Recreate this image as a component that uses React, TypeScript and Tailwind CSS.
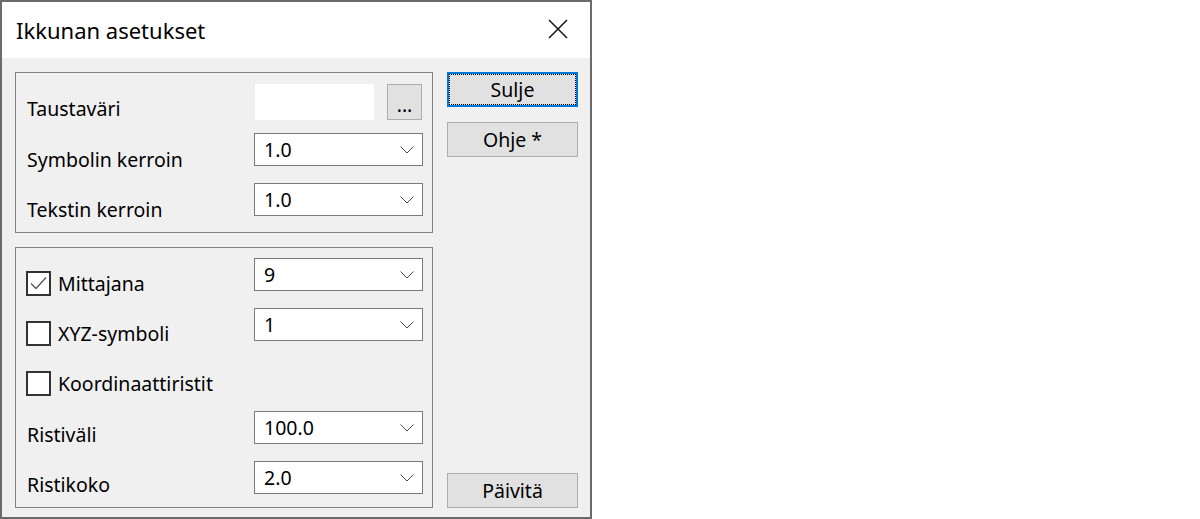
import React from "react";

const FONT = "font-['Noto_Sans',sans-serif]";

function Chevron() {
  return (
    <svg width="14" height="8" viewBox="0 0 14 8" fill="none">
      <path d="M0.5 0.5L7 7L13.5 0.5" stroke="#4a4a4a" strokeWidth="1" />
    </svg>
  );
}

function Combo({ value }: { value: string }) {
  return (
    <div className="flex h-[33px] w-[169px] items-center justify-between border border-[#7a7a7a] bg-white pl-[9px] pr-[8px]">
      <span className="text-[19.5px] leading-[20px]">{value}</span>
      <Chevron />
    </div>
  );
}

function CheckBox({ checked }: { checked?: boolean }) {
  return (
    <div className="flex h-[25px] w-[25px] shrink-0 items-center justify-center border-2 border-[#333333] bg-white">
      {checked && (
        <svg width="21" height="21" viewBox="0 0 21 21" fill="none">
          <path d="M3 10.5L8 15.5L18 4.5" stroke="#555555" strokeWidth="1.3" />
        </svg>
      )}
    </div>
  );
}

function Btn({ label, focused }: { label: string; focused?: boolean }) {
  if (focused) {
    return (
      <div className="flex h-[35px] w-[131px] border-2 border-[#0078d7] bg-[#e1e1e1]">
        <div className="flex flex-1 items-center justify-center border border-dotted border-black">
          <span className="text-[19.5px] leading-[20px]">{label}</span>
        </div>
      </div>
    );
  }
  return (
    <div className="flex h-[35px] w-[131px] items-center justify-center border border-[#adadad] bg-[#e1e1e1]">
      <span className="text-[19.5px] leading-[20px]">{label}</span>
    </div>
  );
}

export default function App() {
  return (
    <div className={`flex h-[519px] w-[1200px] bg-white text-black ${FONT}`}>
      <div className="flex h-[519px] w-[592px] flex-col border-2 border-[#6b6b6b]">
        {/* title bar */}
        <div className="flex h-[56px] shrink-0 justify-between bg-white">
          <span className="pl-[14px] pt-[17px] text-[22px] leading-[22px]">Ikkunan asetukset</span>
          <svg className="mr-[22px] mt-[17px]" width="20" height="20" viewBox="0 0 20 20" fill="none">
            <path d="M1 1L19 19M19 1L1 19" stroke="#111111" strokeWidth="1.5" />
          </svg>
        </div>

        {/* body */}
        <div className="flex flex-1 bg-[#f0f0f0] pl-[13px] pr-[12px] pt-[14px] pb-[9px] text-[19.5px] leading-[20px]">
          <div className="flex w-[418px] flex-col">
            {/* group 1 */}
            <div className="flex flex-col border border-[#828282] pl-[11px] pt-[11px] pb-[16px]">
              <div className="flex h-[36px] items-start">
                <span className="w-[227px] pt-[15px]">Taustaväri</span>
                <div className="ml-[1px] h-[36px] w-[119px] bg-white" />
                <div className="ml-[13px] flex h-[36px] w-[35px] items-center justify-center border border-[#adadad] bg-[#e1e1e1] pt-[5px]">
                  ...
                </div>
              </div>
              <div className="mt-[13px] flex h-[33px] items-start">
                <span className="w-[227px] pt-[17px]">Symbolin kerroin</span>
                <Combo value="1.0" />
              </div>
              <div className="mt-[17px] flex h-[33px] items-start">
                <span className="w-[227px] pt-[17px]">Tekstin kerroin</span>
                <Combo value="1.0" />
              </div>
            </div>

            {/* group 2 */}
            <div className="mt-[14px] flex flex-col border border-[#828282] pl-[11px] pt-[10px] pb-[13px]">
              <div className="flex h-[50px] items-start">
                <div className="ml-[-1px] flex w-[228px] items-start">
                  <div className="mt-[13px]">
                    <CheckBox checked />
                  </div>
                  <span className="ml-[7px] pt-[16px]">Mittajana</span>
                </div>
                <Combo value="9" />
              </div>
              <div className="flex h-[50px] items-start">
                <div className="ml-[-1px] flex w-[228px] items-start">
                  <div className="mt-[13px]">
                    <CheckBox />
                  </div>
                  <span className="ml-[7px] pt-[16px]">XYZ-symboli</span>
                </div>
                <Combo value="1" />
              </div>
              <div className="flex h-[53px] items-start">
                <div className="ml-[-1px] flex w-[228px] items-start">
                  <div className="mt-[13px]">
                    <CheckBox />
                  </div>
                  <span className="ml-[7px] pt-[16px]">Koordinaattiristit</span>
                </div>
              </div>
              <div className="flex h-[50px] items-start">
                <span className="w-[227px] pt-[14px]">Ristiväli</span>
                <Combo value="100.0" />
              </div>
              <div className="flex h-[33px] items-start">
                <span className="w-[227px] pt-[14px]">Ristikoko</span>
                <Combo value="2.0" />
              </div>
            </div>
          </div>

          {/* buttons */}
          <div className="ml-[14px] flex w-[131px] flex-col">
            <Btn label="Sulje" focused />
            <div className="mt-[15px]">
              <Btn label="Ohje *" />
            </div>
            <div className="mt-auto">
              <Btn label="Päivitä" />
            </div>
          </div>
        </div>
      </div>
    </div>
  );
}
